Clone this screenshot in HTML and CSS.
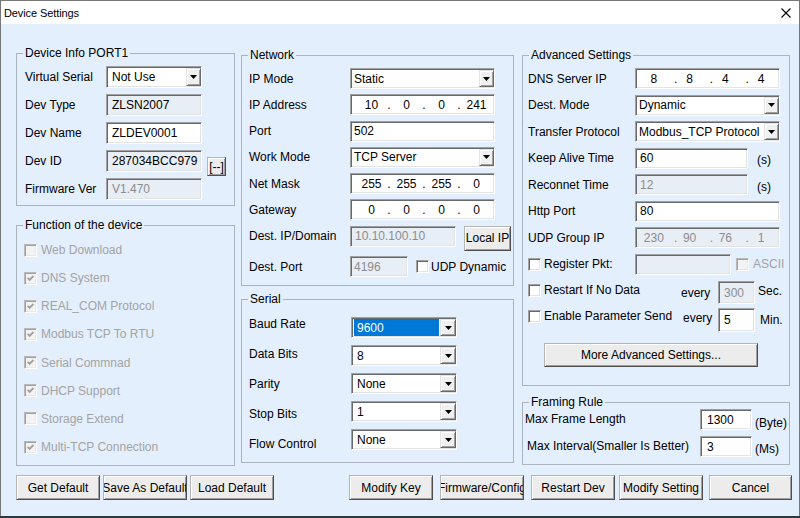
FILE: index.html
```html
<!DOCTYPE html>
<html>
<head>
<meta charset="utf-8">
<title>Device Settings</title>
<link rel="stylesheet" href="styles.css">
</head>
<body>
<div class="window">
  <div class="titlebar">
    <span class="title">Device Settings</span>
    <svg class="close" width="10" height="10" viewBox="0 0 10 10"><path d="M0.5 0.5L9.5 9.5M9.5 0.5L0.5 9.5" stroke="#000" stroke-width="1.1" fill="none"/></svg>
  </div>
  <div class="client">
    <div class="columns">
      <div class="col col1">
        <fieldset class="group">
          <legend>Device Info PORT1</legend>
          <div class="body-dev">
            <div class="row22">
              <span class="lbl-dev">Virtual Serial</span>
              <div class="sel w96 h22 sel-dev"><span class="val">Not Use</span><span class="arr"><svg width="7" height="4" viewBox="0 0 7 4"><path d="M0 0H7L3.5 4Z"/></svg></span></div>
            </div>
            <div class="row22">
              <span class="lbl-dev">Dev Type</span>
              <div class="tb ro w96 h22 tb-dev">ZLSN2007</div>
            </div>
            <div class="row22">
              <span class="lbl-dev">Dev Name</span>
              <div class="tb w96 h22 tb-dev">ZLDEV0001</div>
            </div>
            <div class="row22">
              <span class="lbl-dev">Dev ID</span>
              <div class="tb ro w96 h22 tb-dev">287034BCC979</div>
              <button class="btn btn-mini"><span>[--]</span></button>
            </div>
            <div class="row22">
              <span class="lbl-dev">Firmware Ver</span>
              <div class="tb dis w96 h22 tb-dev">V1.470</div>
            </div>
          </div>
        </fieldset>
        <fieldset class="group g-func">
          <legend>Function of the device</legend>
          <div class="body-func">
            <div class="chk-row"><span class="cb dis"></span><span>Web Download</span></div>
            <div class="chk-row"><span class="cb dis"><svg width="7" height="7" viewBox="0 0 7 7"><path d="M0.6 2.8L2.6 4.8L6.4 1" stroke="#a0a0a0" stroke-width="1.9" fill="none"/></svg></span><span>DNS System</span></div>
            <div class="chk-row"><span class="cb dis"><svg width="7" height="7" viewBox="0 0 7 7"><path d="M0.6 2.8L2.6 4.8L6.4 1" stroke="#a0a0a0" stroke-width="1.9" fill="none"/></svg></span><span>REAL_COM Protocol</span></div>
            <div class="chk-row"><span class="cb dis"><svg width="7" height="7" viewBox="0 0 7 7"><path d="M0.6 2.8L2.6 4.8L6.4 1" stroke="#a0a0a0" stroke-width="1.9" fill="none"/></svg></span><span>Modbus TCP To RTU</span></div>
            <div class="chk-row"><span class="cb dis"><svg width="7" height="7" viewBox="0 0 7 7"><path d="M0.6 2.8L2.6 4.8L6.4 1" stroke="#a0a0a0" stroke-width="1.9" fill="none"/></svg></span><span>Serial Commnad</span></div>
            <div class="chk-row"><span class="cb dis"><svg width="7" height="7" viewBox="0 0 7 7"><path d="M0.6 2.8L2.6 4.8L6.4 1" stroke="#a0a0a0" stroke-width="1.9" fill="none"/></svg></span><span>DHCP Support</span></div>
            <div class="chk-row"><span class="cb dis"></span><span>Storage Extend</span></div>
            <div class="chk-row"><span class="cb dis"><svg width="7" height="7" viewBox="0 0 7 7"><path d="M0.6 2.8L2.6 4.8L6.4 1" stroke="#a0a0a0" stroke-width="1.9" fill="none"/></svg></span><span>Multi-TCP Connection</span></div>
          </div>
        </fieldset>
      </div>

      <div class="col col2">
        <fieldset class="group">
          <legend>Network</legend>
          <div class="body-net">
            <div class="row21">
              <span class="lbl-net">IP Mode</span>
              <div class="sel w145 h21"><span class="val">Static</span><span class="arr"><svg width="7" height="4" viewBox="0 0 7 4"><path d="M0 0H7L3.5 4Z"/></svg></span></div>
            </div>
            <div class="row21">
              <span class="lbl-net">IP Address</span>
              <div class="tb ip ip-net w145 h21"><span>10</span><span class="dot">.</span><span>0</span><span class="dot">.</span><span>0</span><span class="dot">.</span><span>241</span></div>
            </div>
            <div class="row21">
              <span class="lbl-net">Port</span>
              <div class="tb w145 h21 tb-net">502</div>
            </div>
            <div class="row21">
              <span class="lbl-net">Work Mode</span>
              <div class="sel w145 h21"><span class="val">TCP Server</span><span class="arr"><svg width="7" height="4" viewBox="0 0 7 4"><path d="M0 0H7L3.5 4Z"/></svg></span></div>
            </div>
            <div class="row21">
              <span class="lbl-net">Net Mask</span>
              <div class="tb ip ip-net w145 h21"><span>255</span><span class="dot">.</span><span>255</span><span class="dot">.</span><span>255</span><span class="dot">.</span><span>0</span></div>
            </div>
            <div class="row21">
              <span class="lbl-net">Gateway</span>
              <div class="tb ip ip-net w145 h21"><span>0</span><span class="dot">.</span><span>0</span><span class="dot">.</span><span>0</span><span class="dot">.</span><span>0</span></div>
            </div>
            <div class="row-destip">
              <span class="lbl-net h21 vc">Dest. IP/Domain</span>
              <div class="tb dis w106 h21 tb-net2">10.10.100.10</div>
              <button class="btn btn-local"><span>Local IP</span></button>
            </div>
            <div class="row21">
              <span class="lbl-net">Dest. Port</span>
              <div class="tb dis w58 h21 tb-net">4196</div>
              <span class="cb cb-udp"></span>
              <span class="udp-txt">UDP Dynamic</span>
            </div>
          </div>
        </fieldset>
        <fieldset class="group g-serial">
          <legend>Serial</legend>
          <div class="body-serial">
            <div class="lblcol">
              <span>Baud Rate</span>
              <span>Data Bits</span>
              <span>Parity</span>
              <span>Stop Bits</span>
              <span>Flow Control</span>
            </div>
            <div class="selcol">
              <div class="sel w106 h21 sel-ser"><span class="val hl">9600</span><span class="arr"><svg width="7" height="4" viewBox="0 0 7 4"><path d="M0 0H7L3.5 4Z"/></svg></span></div>
              <div class="sel w106 h21 sel-ser"><span class="val">8</span><span class="arr"><svg width="7" height="4" viewBox="0 0 7 4"><path d="M0 0H7L3.5 4Z"/></svg></span></div>
              <div class="sel w106 h21 sel-ser"><span class="val">None</span><span class="arr"><svg width="7" height="4" viewBox="0 0 7 4"><path d="M0 0H7L3.5 4Z"/></svg></span></div>
              <div class="sel w106 h21 sel-ser"><span class="val">1</span><span class="arr"><svg width="7" height="4" viewBox="0 0 7 4"><path d="M0 0H7L3.5 4Z"/></svg></span></div>
              <div class="sel w106 h21 sel-ser"><span class="val">None</span><span class="arr"><svg width="7" height="4" viewBox="0 0 7 4"><path d="M0 0H7L3.5 4Z"/></svg></span></div>
            </div>
          </div>
        </fieldset>
      </div>

      <div class="col col3">
        <fieldset class="group">
          <legend>Advanced Settings</legend>
          <div class="body-adv">
            <div class="adv-rows">
              <div class="row21">
                <span class="lbl-adv">DNS Server IP</span>
                <div class="tb ip ip-adv w145 h21"><span>8</span><span class="dot">.</span><span>8</span><span class="dot">.</span><span>4</span><span class="dot">.</span><span>4</span></div>
              </div>
              <div class="row21">
                <span class="lbl-adv">Dest. Mode</span>
                <div class="sel w145 h21"><span class="val">Dynamic</span><span class="arr"><svg width="7" height="4" viewBox="0 0 7 4"><path d="M0 0H7L3.5 4Z"/></svg></span></div>
              </div>
              <div class="row21">
                <span class="lbl-adv">Transfer Protocol</span>
                <div class="sel w145 h21"><span class="val">Modbus_TCP Protocol</span><span class="arr"><svg width="7" height="4" viewBox="0 0 7 4"><path d="M0 0H7L3.5 4Z"/></svg></span></div>
              </div>
              <div class="row21">
                <span class="lbl-adv">Keep Alive Time</span>
                <div class="tb w113 h21 tb-adv">60</div>
                <span class="unit-s u1">(s)</span>
              </div>
              <div class="row21">
                <span class="lbl-adv">Reconnet Time</span>
                <div class="tb dis w113 h21 tb-adv">12</div>
                <span class="unit-s u2">(s)</span>
              </div>
              <div class="row21">
                <span class="lbl-adv">Http Port</span>
                <div class="tb w145 h21 tb-adv">80</div>
              </div>
              <div class="row21">
                <span class="lbl-adv">UDP Group IP</span>
                <div class="tb dis ip ip-adv w145 h21"><span>230</span><span class="dot">.</span><span>90</span><span class="dot">.</span><span>76</span><span class="dot">.</span><span>1</span></div>
              </div>
              <div class="row21">
                <span class="cblbl w107"><span class="cb"></span><span>Register Pkt:</span></span>
                <div class="tb dis w96 h21"></div>
                <span class="cb dis cb-ascii"></span>
                <span class="ascii">ASCII</span>
              </div>
            </div>
            <div class="row-restart">
              <span class="cblbl w153 h18"><span class="cb"></span><span>Restart If No Data</span></span>
              <span class="every lh24">every</span>
              <div class="tb dis w37 h23 tb-small">300</div>
              <span class="unit-sec">Sec.</span>
            </div>
            <div class="row-enable">
              <span class="cblbl w153 h16"><span class="cb"></span><span>Enable Parameter Send</span></span>
              <span class="every every2">every</span>
              <div class="tb w37 h24 tb-small">5</div>
              <span class="unit-min">Min.</span>
            </div>
            <button class="btn btn-more"><span>More Advanced Settings...</span></button>
          </div>
        </fieldset>
        <fieldset class="group g-frame">
          <legend>Framing Rule</legend>
          <div class="body-frame">
            <div class="frow">
              <span class="flbl">Max Frame Length</span>
              <div class="tb w52 h21 tb-frame">1300</div>
              <span class="funit fu1">(Byte)</span>
            </div>
            <div class="frow frow2">
              <span class="flbl flbl2">Max Interval(Smaller Is Better)</span>
              <div class="tb w52 h21 tb-frame">3</div>
              <span class="funit fu2">(Ms)</span>
            </div>
          </div>
        </fieldset>
      </div>
    </div>

    <div class="buttons">
      <button class="btn btn-bottom"><span>Get Default</span></button>
      <button class="btn btn-bottom ml3"><span>Save As Default</span></button>
      <button class="btn btn-bottom ml3"><span>Load Default</span></button>
      <button class="btn btn-bottom ml75"><span>Modify Key</span></button>
      <button class="btn btn-bottom ml7"><span>Firmware/Config</span></button>
      <button class="btn btn-bottom ml7"><span>Restart Dev</span></button>
      <button class="btn btn-bottom ml4"><span>Modify Setting</span></button>
      <button class="btn btn-bottom ml6 w83"><span>Cancel</span></button>
    </div>
  </div>
</div>
</body>
</html>
```

FILE: styles.css
```css
* { box-sizing: border-box; }
html, body { margin: 0; padding: 0; }
body {
  width: 800px;
  height: 518px;
  overflow: hidden;
  background: #2e393c;
  font-family: "Liberation Sans", Arial, sans-serif;
  font-size: 12px;
  line-height: 14px;
  color: #000;
}
.window {
  width: 800px;
  height: 516px;
  border: 1px solid #777;
  border-bottom: none;
  background: #e4effd;
  display: flex;
  flex-direction: column;
}
.titlebar {
  height: 23px;
  flex: none;
  background: #fff;
  display: flex;
  align-items: center;
  justify-content: space-between;
  padding: 0 8px 0 3px;
}
.title { font-size: 11px; letter-spacing: -0.1px; }
.client { flex: 1; padding: 22px 0 0 15px; }
.columns { display: flex; align-items: flex-start; }
.col1 { width: 219px; }
.col2 { width: 273px; margin-left: 6px; margin-top: 2px; }
.col3 { width: 268px; margin-left: 8px; margin-top: 2px; }

fieldset.group {
  margin: 0;
  padding: 0;
  border: 1px solid #abb3bd;
  min-width: 0;
  overflow: hidden;
}
fieldset.group legend {
  margin-left: 6px;
  padding: 0 2px;
  line-height: 14px;
}
fieldset.group.g-func { margin-top: 12px; }
fieldset.group.g-serial { margin-top: 6px; }
fieldset.group.g-frame { margin-top: 9px; }

/* widths/heights */
.w37 { width: 37px; } .w52 { width: 52px; } .w58 { width: 58px; }
.w96 { width: 96px; } .w106 { width: 106px; } .w107 { width: 107px; }
.w113 { width: 113px; } .w145 { width: 145px; } .w153 { width: 153px; }
.h16 { height: 16px; } .h18 { height: 18px; } .h21 { height: 21px; } .h22 { height: 22px; }
.h23 { height: 23px; } .h24 { height: 24px; }
.vc { display: flex; align-items: center; }

/* text box */
.tb {
  flex: none;
  border: 1px solid;
  border-color: #a0a0a0 #fff #fff #a0a0a0;
  box-shadow: inset 1px 1px 0 #696969, inset -1px -1px 0 #e3e3e3;
  background: #fff;
  white-space: nowrap;
  overflow: hidden;
  display: flex;
  align-items: center;
  padding-left: 3px;
}
.tb.ro { background: #e8eef6; }
.tb.dis { background: #e8eef6; color: #8c8c8c; }
.tb-dev { padding-left: 5px; }
.tb-net { padding-left: 3px; }
.tb-net2 { padding-left: 4px; }
.tb-adv { padding-left: 4px; }
.tb-small { padding-left: 5px; }
.tb-frame { padding-left: 6px; }

.ip {
  display: grid;
  grid-template-columns: 1fr 0px 1fr 0px 1fr 0px 1fr;
  align-items: center;
  padding-left: 0;
}
.ip-net { padding-left: 3px; }
.ip > span { text-align: center; }
.ip > .dot { width: 0; display: flex; justify-content: center; }
.ip-adv > .dot { padding-left: 4px; }

/* select */
.sel {
  flex: none;
  display: flex;
  border: 1px solid;
  border-color: #a0a0a0 #fff #fff #a0a0a0;
  box-shadow: inset 1px 1px 0 #696969, inset -1px -1px 0 #e3e3e3;
  background: #fff;
  padding: 1px 0 1px 1px;
}
.sel .val {
  flex: 1;
  min-width: 0;
  margin: 0 1px 0 1px;
  padding-left: 1px;
  display: flex;
  align-items: center;
  white-space: nowrap;
  overflow: hidden;
}
.sel-dev .val { padding-left: 3px; }
.sel-ser .val { padding-left: 3px; }
.sel .val.hl { background: #0078d7; color: #fff; margin-left: 1px; }
.sel .arr {
  flex: none;
  width: 15px;
  background: #f0f0f0;
  border: 1px solid;
  border-color: #e3e3e3 #696969 #696969 #e3e3e3;
  box-shadow: inset 1px 1px 0 #fff, inset -1px -1px 0 #a0a0a0;
  display: flex;
  align-items: center;
  justify-content: center;
}
.sel-ser .arr { width: 16px; }
.sel .arr svg { display: block; fill: #000; }

/* buttons */
.btn {
  flex: none;
  margin: 0;
  padding: 0;
  font: inherit;
  color: #000;
  background: #ececec;
  border: 1px solid;
  border-color: #b4b4b4 #4d4d4d #4d4d4d #b4b4b4;
  box-shadow: inset 1px 1px 0 #fff, inset -1px -1px 0 #a0a0a0;
  display: flex;
  align-items: center;
  justify-content: center;
  overflow: hidden;
  white-space: nowrap;
}
.btn > span { flex: none; }
.btn-mini { width: 19px; height: 19px; margin-left: 5px; align-self: flex-start; margin-top: 7px; }
.btn-local { width: 47px; height: 25px; margin-left: 8px; }
.btn-more { width: 214px; height: 24px; margin-left: 16px; margin-top: 11px; }
.btn-bottom { width: 84px; height: 25px; }
.w83 { width: 83px; }
.ml3 { margin-left: 3px; } .ml4 { margin-left: 4px; } .ml6 { margin-left: 6px; }
.ml7 { margin-left: 7px; } .ml75 { margin-left: 75px; }
.buttons { display: flex; margin-top: 9px; }

/* checkbox */
.cb {
  flex: none;
  width: 13px;
  height: 13px;
  border: 1px solid;
  border-color: #a0a0a0 #fff #fff #a0a0a0;
  box-shadow: inset 1px 1px 0 #696969, inset -1px -1px 0 #e3e3e3;
  background: #fff;
  display: flex;
  align-items: center;
  justify-content: center;
}
.cb.dis {
  background: #f3f3f3;
  border-color: #b9b9b9 #fff #fff #b9b9b9;
  box-shadow: inset 1px 1px 0 #a0a0a0, inset -1px -1px 0 #e8e8e8;
}
.cb svg { display: block; }

/* group 1 */
.body-dev { padding: 6px 8px 5px; display: flex; flex-direction: column; gap: 6px; }
.row22 { height: 22px; display: flex; align-items: center; }
.lbl-dev { width: 81px; flex: none; }

/* functions */
.body-func { padding: 4px 7px 4px; }
.chk-row { height: 28.15px; display: flex; align-items: center; gap: 4px; color: #a3a3a3; }

/* network */
.body-net { padding: 6px 0 8px 7px; display: flex; flex-direction: column; gap: 5.3px; }
.row21 { height: 21px; display: flex; align-items: center; }
.lbl-net { width: 101px; flex: none; }
.row-destip { height: 25px; display: flex; align-items: flex-start; }
.cb-udp { margin-left: 8px; }
.udp-txt { margin-left: 2px; white-space: nowrap; }

/* serial */
.body-serial { display: flex; padding: 0 0 3px 7px; }
.lblcol { width: 102px; padding-top: 3px; display: flex; flex-direction: column; }
.lblcol span { height: 30px; line-height: 30px; }
.selcol { padding-top: 11px; display: flex; flex-direction: column; gap: 7px; }

/* advanced */
.body-adv { padding: 6px 9px 18px 5px; display: flex; flex-direction: column; align-items: flex-start; }
.adv-rows { display: flex; flex-direction: column; gap: 5.5px; }
.lbl-adv { width: 107px; flex: none; white-space: nowrap; }
.unit-s { margin-left: 9px; }
.u1 { padding-top: 3px; }
.u2 { padding-top: 5px; }
.cblbl { flex: none; display: flex; align-items: center; gap: 3px; white-space: nowrap; }
.cb-ascii { margin-left: 5px; }
.ascii { margin-left: 4px; color: #a3a3a3; white-space: nowrap; }
.row-restart { height: 23px; margin-top: 6.5px; display: flex; align-items: flex-start; }
.row-enable { height: 24px; margin-top: 4px; display: flex; align-items: flex-start; }
.every { width: 37px; flex: none; line-height: 20px; }
.lh24 { line-height: 24px; }
.every2 { padding-left: 2px; }
.unit-sec { margin-left: 3px; line-height: 20px; }
.unit-min { margin-left: 5px; line-height: 24px; }

/* framing */
.body-frame { padding: 0 0 7px 0; }
.frow { height: 21px; display: flex; align-items: flex-start; }
.frow2 { margin-top: 6px; }
.flbl { width: 177px; flex: none; line-height: 21px; padding-left: 2px; white-space: nowrap; }
.flbl2 { padding-left: 4px; }
.funit { margin-left: 3px; line-height: 21px; white-space: nowrap; }
.fu1 { padding-top: 4px; }
.fu2 { padding-top: 3px; }
```
